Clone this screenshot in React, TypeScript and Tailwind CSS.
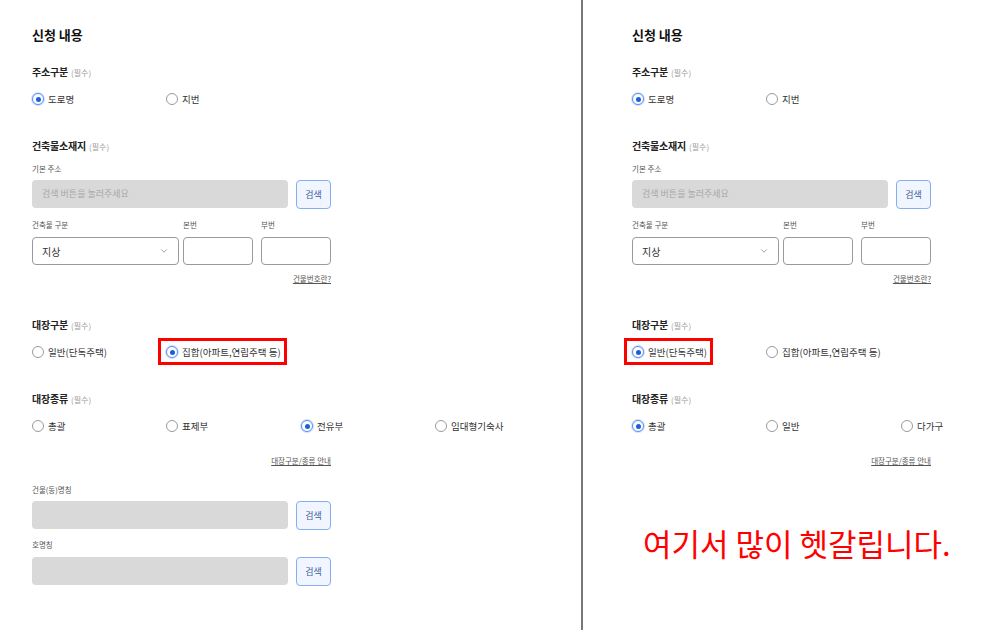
import { ChevronDown } from 'lucide-react';

const FONT = { fontFamily: '"Noto Sans CJK KR", "Noto Sans", sans-serif' };

function Radio({ label, checked, boxed }: { label: string; checked?: boolean; boxed?: boolean }) {
  return (
    <div className="relative justify-self-start inline-flex items-center gap-[4px] h-[14px]">
      <span
        className={`w-[12px] h-[12px] rounded-full border flex items-center justify-center bg-white ${
          checked ? 'border-[#5b8ef0] ring-1 ring-[#cfe0ff]' : 'border-[#9a9a9a]'
        }`}
      >
        {checked && <span className="w-[5px] h-[5px] rounded-full bg-[#1a5fe0]" />}
      </span>
      <span className="text-[9.5px] text-[#333] leading-[14px] whitespace-nowrap">{label}</span>
      {/* annotation box */}
      {boxed && <span className="absolute -left-[8px] -right-[6px] -top-[7px] -bottom-[6px] border-[3px] border-[#f00]" />}
    </div>
  );
}

function SectionLabel({ text, className = '' }: { text: string; className?: string }) {
  return (
    <div className={`h-[14px] leading-[14px] flex items-baseline gap-[3px] ${className}`}>
      <span className="text-[10px] font-bold tracking-[-0.2px] text-[#222]">{text}</span>
      <span className="text-[8px] text-[#999]">(필수)</span>
    </div>
  );
}

function SmallLabel({ text, className = '' }: { text: string; className?: string }) {
  return <div className={`h-[12px] leading-[12px] text-[7.5px] text-[#555] ${className}`}>{text}</div>;
}

function SearchRow({ placeholder, className = '' }: { placeholder?: string; className?: string }) {
  return (
    <div className={`flex gap-[8px] w-[299px] ${className}`}>
      <div className="flex-1 h-[28px] rounded-[4px] bg-[#d9d9d9] flex items-center px-[10px] text-[9px] text-[#a8a8a8]">
        {placeholder}
      </div>
      <button className="w-[35px] h-[29px] rounded-[4px] border border-[#86aef2] bg-[#f0f5ff] text-[9px] text-[#3d5f99]">
        검색
      </button>
    </div>
  );
}

function Panel({ variant }: { variant: 'left' | 'right' }) {
  const left = variant === 'left';
  return (
    <div className="flex flex-col pt-[26px]">
      <div className="h-[18px] leading-[18px] text-[13px] font-bold text-[#111]">신청 내용</div>

      <SectionLabel text="주소구분" className="mt-[21px]" />
      <div className="mt-[13px] grid grid-cols-[134px_135px]">
        <Radio label="도로명" checked />
        <Radio label="지번" />
      </div>

      <SectionLabel text="건축물소재지" className="mt-[33px]" />
      <SmallLabel text="기본 주소" className="mt-[10px]" />
      <SearchRow placeholder="검색 버튼을 눌러주세요" className="mt-[5px]" />

      <div className="mt-[10px] flex gap-[4px] w-[299px]">
        <div className="w-[147px]">
          <SmallLabel text="건축물 구분" />
          <div className="mt-[6px] h-[28px] rounded-[4px] border border-[#9a9a9a] flex items-center justify-between pl-[9px] pr-[9px]">
            <span className="text-[10px] text-[#333]">지상</span>
            <ChevronDown size={10} strokeWidth={1.5} className="text-[#666]" />
          </div>
        </div>
        <div className="w-[70px]">
          <SmallLabel text="본번" />
          <div className="mt-[6px] h-[28px] rounded-[4px] border border-[#9a9a9a]" />
        </div>
        <div className="w-[70px] ml-[4px]">
          <SmallLabel text="부번" />
          <div className="mt-[6px] h-[28px] rounded-[4px] border border-[#9a9a9a]" />
        </div>
      </div>
      <div className="mt-[8px] w-[299px] h-[12px] leading-[12px] text-right text-[7.5px] text-[#555] underline">건물번호란?</div>

      <SectionLabel text="대장구분" className="mt-[33px]" />
      <div className="mt-[13px] grid grid-cols-[134px_135px]">
        <Radio label="일반(단독주택)" checked={!left} boxed={!left} />
        <Radio label="집합(아파트,연립주택 등)" checked={left} boxed={left} />
      </div>

      <SectionLabel text="대장종류" className="mt-[33px]" />
      {left ? (
        <div className="mt-[13px] grid grid-cols-[134px_135px_134px_134px]">
          <Radio label="총괄" />
          <Radio label="표제부" />
          <Radio label="전유부" checked />
          <Radio label="임대형기숙사" />
        </div>
      ) : (
        <div className="mt-[13px] grid grid-cols-[134px_135px_134px]">
          <Radio label="총괄" checked />
          <Radio label="일반" />
          <Radio label="다가구" />
        </div>
      )}
      <div className="mt-[22px] w-[299px] h-[12px] leading-[12px] text-right text-[7.5px] text-[#555] underline">대장구분/종류 안내</div>

      {left ? (
        <>
          <SmallLabel text="건물(동)명칭" className="mt-[17px]" />
          <SearchRow className="mt-[5px]" />
          <SmallLabel text="호명칭" className="mt-[9px]" />
          <SearchRow className="mt-[6px]" />
        </>
      ) : (
        <div className="mt-[56px] ml-[11px] text-[31px] leading-[40px] text-[#f00] whitespace-nowrap">여기서 많이 헷갈립니다.</div>
      )}
    </div>
  );
}

export default function App() {
  return (
    <div className="w-[1000px] h-[630px] bg-white flex overflow-hidden" style={FONT}>
      <div className="w-[581px] pl-[32px] shrink-0">
        <Panel variant="left" />
      </div>
      <div className="w-[2px] bg-[#777] shrink-0" />
      <div className="flex-1 pl-[49px]">
        <Panel variant="right" />
      </div>
    </div>
  );
}
